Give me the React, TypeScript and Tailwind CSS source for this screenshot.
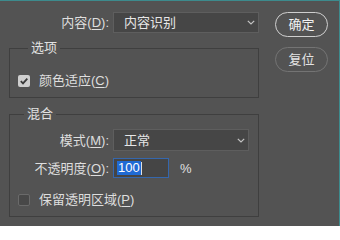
import React from 'react';

const Mn = ({ c }: { c: string }) => (
  <span className="underline underline-offset-2 decoration-1">{c}</span>
);

const Chevron = () => (
  <svg width="8" height="5" viewBox="0 0 8 5" className="shrink-0">
    <path d="M0.8 0.8 L4 4 L7.2 0.8" fill="none" stroke="#c4c4c4" strokeWidth="1.2" />
  </svg>
);

interface SelectProps {
  value: string;
  className: string;
}

const Select: React.FC<SelectProps> = ({ value, className }) => (
  <div
    className={`flex items-center justify-between bg-[#464646] border border-[#5e5e5e] pl-[10px] pr-[3px] text-[#e6e6e6] ${className}`}
  >
    <span className="leading-none">{value}</span>
    <Chevron />
  </div>
);

const Group: React.FC<{ title: string; titleLeft: string; className: string; children: React.ReactNode }> = ({
  title,
  titleLeft,
  className,
  children,
}) => (
  <div className={`relative border border-[#3f3f3f] ${className}`}>
    <span className={`absolute top-[-9px] ${titleLeft} px-[3px] leading-[16px] bg-[#535353] text-[#e2e2e2]`}>
      {title}
    </span>
    {children}
  </div>
);

export default function App() {
  return (
    <div className="w-[340px] h-[226px] bg-[#535353] border-t border-r border-[#3d8b8d] flex pt-[11px] text-[13px] text-[#dedede] font-['Liberation_Sans','Noto_Sans_CJK_SC',sans-serif]">
      <div className="ml-[9px] w-[250px] flex flex-col">
        <div className="flex items-center h-[21px]">
          <label className="w-[100px] text-right leading-none">
            内容(<Mn c="D" />):
          </label>
          <Select value="内容识别" className="ml-[4px] w-[146px] h-[21px]" />
        </div>

        <Group title="选项" titleLeft="left-[18px]" className="mt-[15px] h-[50px] pt-[25px] pl-[8px]">
          <div className="flex items-center">
            <span className="w-[12px] h-[12px] rounded-[2px] bg-[#cfcfcf] flex items-center justify-center">
              <svg width="10" height="10" viewBox="0 0 10 10">
                <path d="M1.8 5.2 L4 7.4 L8.3 2.6" fill="none" stroke="#3a3a3a" strokeWidth="1.8" />
              </svg>
            </span>
            <span className="ml-[9px] leading-none">
              颜色适应(<Mn c="C" />)
            </span>
          </div>
        </Group>

        <Group title="混合" titleLeft="left-[14px]" className="mt-[16px] h-[103px] pt-[14px]">
          <div className="flex items-center h-[22px]">
            <label className="w-[99px] text-right leading-none">
              模式(<Mn c="M" />):
            </label>
            <Select value="正常" className="ml-[4px] w-[136px] h-[22px]" />
          </div>
          <div className="flex items-center h-[20px] mt-[7px]">
            <label className="w-[99px] text-right leading-none">
              不透明度(<Mn c="O" />):
            </label>
            <div className="ml-[4px] w-[56px] h-[20px] bg-[#454545] border border-[#3567ad] flex items-center pl-[3px]">
              <span className="bg-[#1f6ad4] text-white leading-[14px] px-[1px]">100</span>
              <span className="w-px h-[13px] bg-[#e0e0e0]" />
            </div>
            <span className="ml-[11px] leading-none text-[#e0e0e0]">%</span>
          </div>
          <div className="flex items-center mt-[15px] pl-[8px]">
            <span className="w-[12px] h-[12px] rounded-[2px] bg-[#484848] border border-[#6a6a6a]" />
            <span className="ml-[9px] leading-none">
              保留透明区域(<Mn c="P" />)
            </span>
          </div>
        </Group>
      </div>

      <div className="ml-[16px] flex flex-col">
        <button className="w-[53px] h-[25px] rounded-full border-[1.5px] border-[#cfcfcf] text-[#f2f2f2] leading-none">
          确定
        </button>
        <button className="mt-[10px] w-[53px] h-[25px] rounded-full border-[1.5px] border-[#747474] text-[#e4e4e4] leading-none">
          复位
        </button>
      </div>
    </div>
  );
}
